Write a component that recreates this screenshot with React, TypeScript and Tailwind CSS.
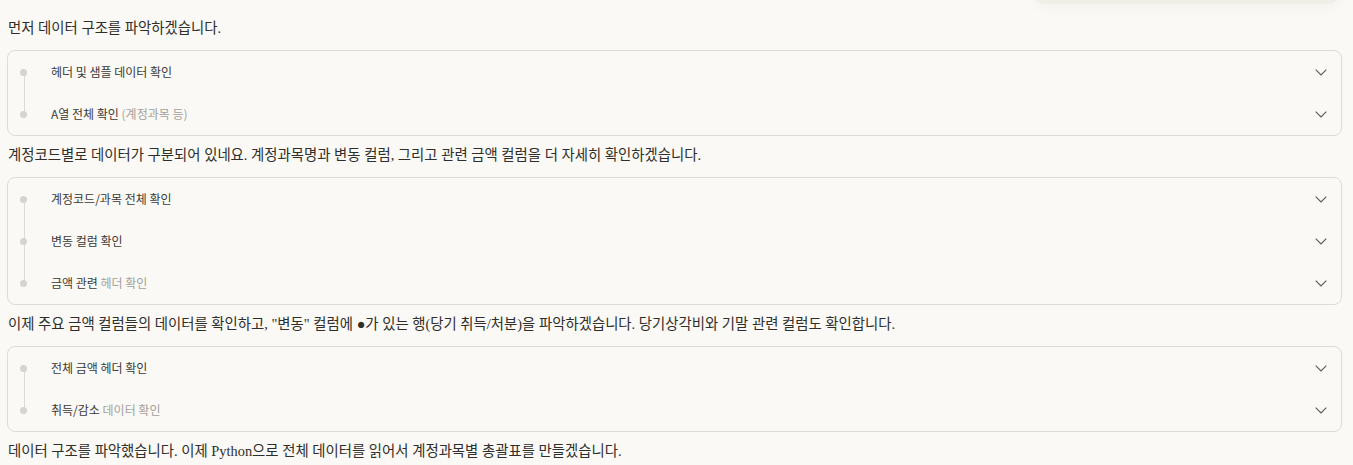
import { ReactNode } from "react";

type Step = { strong: string; muted?: string };

const groups: { intro: string | ReactNode; steps: Step[] }[] = [
  {
    intro: "먼저 데이터 구조를 파악하겠습니다.",
    steps: [
      { strong: "헤더 및 샘플 데이터 확인" },
      { strong: "A열 전체 확인", muted: " (계정과목 등)" },
    ],
  },
  {
    intro:
      "계정코드별로 데이터가 구분되어 있네요. 계정과목명과 변동 컬럼, 그리고 관련 금액 컬럼을 더 자세히 확인하겠습니다.",
    steps: [
      { strong: "계정코드/과목 전체 확인" },
      { strong: "변동 컬럼 확인" },
      { strong: "금액 관련", muted: " 헤더 확인" },
    ],
  },
  {
    intro:
      '이제 주요 금액 컬럼들의 데이터를 확인하고, "변동" 컬럼에 ●가 있는 행(당기 취득/처분)을 파악하겠습니다. 당기상각비와 기말 관련 컬럼도 확인합니다.',
    steps: [
      { strong: "전체 금액 헤더 확인" },
      { strong: "취득/감소", muted: " 데이터 확인" },
    ],
  },
];

function Chevron() {
  return (
    <svg width="12" height="7" viewBox="0 0 12 7" fill="none" className="text-[#5a5955]">
      <path d="M0.7 0.7 L6 6 L11.3 0.7" stroke="currentColor" strokeWidth="1.1" />
    </svg>
  );
}

function Prose({ children }: { children: ReactNode }) {
  return (
    <p className="h-[41px] pl-[1px] pt-[8px] text-[14.4px] leading-[22px] text-[#2f2e2b] [font-family:'Liberation_Serif','Noto_Sans_CJK_KR',serif]">
      {children}
    </p>
  );
}

function StepBox({ steps }: { steps: Step[] }) {
  return (
    <div className="rounded-lg border border-[#dedcd5] bg-[#faf9f5]">
      {steps.map((s, i) => (
        <div key={i} className="relative flex h-[42px] items-center pl-[12px] pr-[14px]">
          {/* connector line */}
          {i < steps.length - 1 && (
            <span className="absolute left-[15.5px] top-[21px] h-[42px] w-px bg-[#dcdad4]" />
          )}
          <span className="relative z-10 h-[7px] w-[7px] rounded-full bg-[#d6d4ce]" />
          <span className="ml-[24px] flex-1 text-[12px] text-[#3a3935] [font-family:'Noto_Sans_CJK_KR',sans-serif]">
            {s.strong}
            {s.muted && <span className="text-[#a3a19b]">{s.muted}</span>}
          </span>
          <Chevron />
        </div>
      ))}
    </div>
  );
}

export default function App() {
  return (
    <div className="h-[465px] w-[1353px] overflow-hidden bg-[#faf9f5] pl-[7px] pr-[11px]">
      {/* bottom of the previous message bubble */}
      <div className="flex h-[9px] justify-end pr-[2px]">
        <div className="-mt-[20px] h-[24px] w-[307px] rounded-b-[12px] bg-[#f0eee6] shadow-[0_4px_12px_rgba(0,0,0,0.03)]" />
      </div>
      {groups.map((g, i) => (
        <div key={i}>
          <Prose>{g.intro}</Prose>
          <StepBox steps={g.steps} />
        </div>
      ))}
      <Prose>
        데이터 구조를 파악했습니다. 이제 Python으로 전체 데이터를 읽어서 계정과목별 총괄표를 만들겠습니다.
      </Prose>
    </div>
  );
}
